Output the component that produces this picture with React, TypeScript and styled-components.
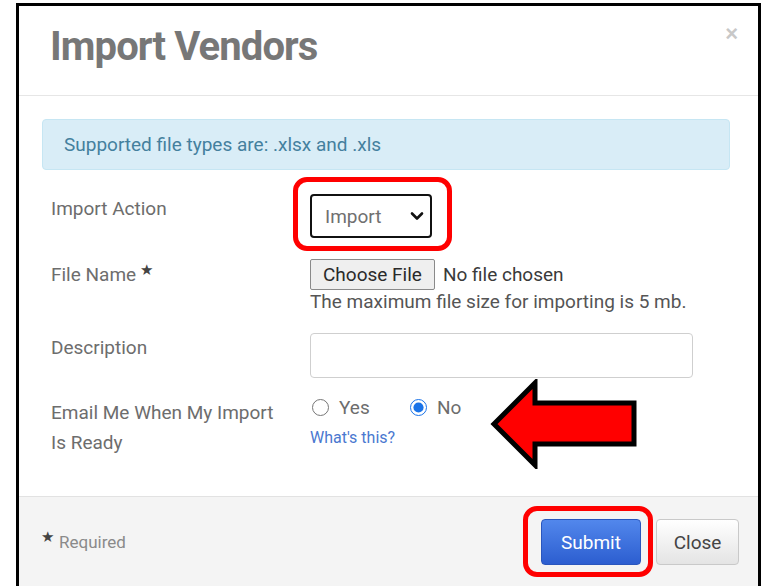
import React from "react";
import styled, { createGlobalStyle } from "styled-components";

const Global = createGlobalStyle`
  html, body {
    margin: 0;
    padding: 0;
    background: #ffffff;
    overflow: hidden;
  }
  body {
    font-family: Roboto, "Liberation Sans", Arial, sans-serif;
  }
  * { box-sizing: border-box; }
`;

/* Black outline around the dialog; its bottom edge runs off the page */
const Frame = styled.div`
  margin: 3px 0 0 16px;
  width: 745px;
  height: calc(100vh - 3px);
  border: 3px solid #000;
  border-bottom: none;
  display: flex;
  flex-direction: column;
  background: #fff;
`;

const Header = styled.div`
  height: 90px;
  flex-shrink: 0;
  border-bottom: 1px solid #e6e6e6;
  display: flex;
  align-items: flex-start;
  justify-content: space-between;
  padding: 17px 20px 0 31px;
`;

const Title = styled.h1`
  margin: 0;
  font-family: Roboto, "Liberation Sans", sans-serif;
  font-weight: 700;
  font-size: 40px;
  line-height: 48px;
  letter-spacing: -0.9px;
  color: #777;
`;

const CloseX = styled.button`
  border: none;
  background: none;
  padding: 0;
  margin-top: 0;
  font-family: "Liberation Sans", Arial, sans-serif;
  font-size: 22px;
  font-weight: 700;
  line-height: 22px;
  color: #c8c8c8;
  cursor: pointer;
`;

const Body = styled.div`
  padding: 23px 28px 0 23px;
  height: 400px;
  flex-shrink: 0;
`;

const Alert = styled.div`
  height: 51px;
  background: #d9edf7;
  border: 1px solid #c6e6f3;
  border-radius: 4px;
  color: #44809e;
  font-size: 19px;
  display: flex;
  align-items: center;
  padding-left: 21px;
`;

const Form = styled.div`
  display: grid;
  grid-template-columns: 259px 1fr;
  padding-left: 9px;
  margin-top: 24px;
`;

const Label = styled.div<{ $top: number; $lh?: number }>`
  padding-top: ${(p) => p.$top}px;
  font-size: 19px;
  line-height: ${(p) => p.$lh ?? 26}px;
  color: #6d6d6d;
`;

const Star = styled.span`
  font-size: 15px;
  vertical-align: 6px;
  margin-left: 4px;
  color: #444;
`;

const Field = styled.div<{ $gap: number }>`
  margin-bottom: ${(p) => p.$gap}px;
`;

const Highlight = styled.div`
  position: relative;
  display: inline-block;
`;

/* Red rounded callout drawn over a control */
const Ring = styled.div<{ $l: number; $t: number; $r: number; $b: number }>`
  position: absolute;
  left: ${(p) => p.$l}px;
  top: ${(p) => p.$t}px;
  right: ${(p) => p.$r}px;
  bottom: ${(p) => p.$b}px;
  border: 5px solid #f00;
  border-radius: 14px;
  pointer-events: none;
`;

const Select = styled.select`
  display: block;
  width: 122px;
  height: 44px;
  border: 2.5px solid #111;
  border-radius: 4px;
  padding: 0 8px 0 13px;
  font-family: Roboto, sans-serif;
  font-size: 19px;
  color: #707070;
  background: #fff;
  appearance: none;
`;

const Chevron = styled.svg`
  position: absolute;
  right: 8px;
  top: 17px;
  pointer-events: none;
`;

const FileInput = styled.input`
  display: block;
  height: 31px;
  font-family: Roboto, sans-serif;
  font-size: 19px;
  color: #3a3a3a;
  &::file-selector-button {
    height: 31px;
    margin-right: 8px;
    padding: 0 12px;
    font-family: Roboto, sans-serif;
    font-size: 19px;
    color: #2a2a2a;
    background: #efefef;
    border: 1px solid #8a8a8a;
    border-radius: 2px;
  }
`;

const Help = styled.div`
  font-size: 19px;
  line-height: 24px;
  color: #555;
`;

const TextInput = styled.input`
  display: block;
  width: 383px;
  height: 45px;
  border: 1px solid #cfcfcf;
  border-radius: 4px;
  background: #fff;
`;

const RadioRow = styled.div`
  position: relative;
  display: flex;
  align-items: center;
  height: 26px;
  margin-top: 16px;
  padding-left: 2px;
`;

const RadioOption = styled.label<{ $w: number }>`
  display: flex;
  align-items: center;
  gap: 10px;
  width: ${(p) => p.$w}px;
  font-size: 19px;
  color: #6d6d6d;
`;

const Radio = styled.input`
  width: 17px;
  height: 17px;
  margin: 0;
  accent-color: #1a73e8;
`;

const HelpLink = styled.a`
  display: block;
  margin-top: 9px;
  font-size: 16px;
  line-height: 18px;
  color: #4a78d0;
  text-decoration: none;
`;

/* Big red pointer aimed at the radio choices */
const Arrow = styled.svg`
  position: absolute;
  left: 180px;
  top: -15px;
`;

const Footer = styled.div`
  flex: 1;
  border-top: 1px solid #e2e2e2;
  background: #f4f4f4;
  display: flex;
  justify-content: space-between;
  align-items: flex-start;
  padding: 22px 19px 0 22px;
`;

const Required = styled.div`
  margin-top: 9px;
  font-size: 17px;
  color: #8a8a8a;
`;

const ReqStar = styled.span`
  font-size: 15px;
  color: #444;
  vertical-align: 6px;
  margin-right: 5px;
`;

const Buttons = styled.div`
  display: flex;
  gap: 15px;
`;

const Button = styled.button<{ $primary?: boolean; $w: number }>`
  width: ${(p) => p.$w}px;
  height: 46px;
  border-radius: 4px;
  font-family: Roboto, sans-serif;
  font-size: 19px;
  cursor: pointer;
  ${(p) =>
    p.$primary
      ? `
    color: #fff;
    background: linear-gradient(#5287ec, #2c5ed0);
    border: 1px solid #2a56bd;
  `
      : `
    color: #444;
    background: linear-gradient(#ffffff, #e4e4e4);
    border: 1px solid #c9c9c9;
  `}
`;

export default function App() {
  return (
    <>
      <Global />
      <Frame>
        <Header>
          <Title>Import Vendors</Title>
          <CloseX aria-label="Close">×</CloseX>
        </Header>
        <Body>
          <Alert>Supported file types are: .xlsx and .xls</Alert>
          <Form>
            <Label $top={2}>Import Action</Label>
            <Field $gap={21}>
              <Highlight>
                <Select defaultValue="import">
                  <option value="import">Import</option>
                </Select>
                <Chevron width="14" height="10" viewBox="0 0 14 10">
                  <path
                    d="M2 2.5 L7 7.5 L12 2.5"
                    fill="none"
                    stroke="#111"
                    strokeWidth="2.6"
                    strokeLinecap="round"
                    strokeLinejoin="round"
                  />
                </Chevron>
                <Ring $l={-17} $t={-17} $r={-20} $b={-13} />
              </Highlight>
            </Field>

            <Label $top={0} $lh={22}>
              File Name<Star>★</Star>
            </Label>
            <Field $gap={19}>
              <FileInput type="file" />
              <Help>The maximum file size for importing is 5 mb.</Help>
            </Field>

            <Label $top={2}>Description</Label>
            <Field $gap={0}>
              <TextInput type="text" />
            </Field>

            <Label $top={20} $lh={30}>
              Email Me When My Import
              <br />
              Is Ready
            </Label>
            <Field $gap={0}>
              <RadioRow>
                <RadioOption $w={98}>
                  <Radio type="radio" name="email" value="yes" />
                  Yes
                </RadioOption>
                <RadioOption $w={60}>
                  <Radio type="radio" name="email" value="no" defaultChecked />
                  No
                </RadioOption>
                <Arrow width="150" height="90" viewBox="0 0 150 90">
                  <path
                    d="M4 45 L45 4 L45 24 L144 24 L144 65 L45 65 L45 86 Z"
                    fill="#f00"
                    stroke="#000"
                    strokeWidth="5"
                    strokeLinejoin="miter"
                  />
                </Arrow>
              </RadioRow>
              <HelpLink href="#">What's this?</HelpLink>
            </Field>
          </Form>
        </Body>
        <Footer>
          <Required>
            <ReqStar>★</ReqStar>Required
          </Required>
          <Buttons>
            <Highlight>
              <Button $primary $w={100}>Submit</Button>
              <Ring $l={-18} $t={-13} $r={-12} $b={-12} />
            </Highlight>
            <Button $w={83}>Close</Button>
          </Buttons>
        </Footer>
      </Frame>
    </>
  );
}
